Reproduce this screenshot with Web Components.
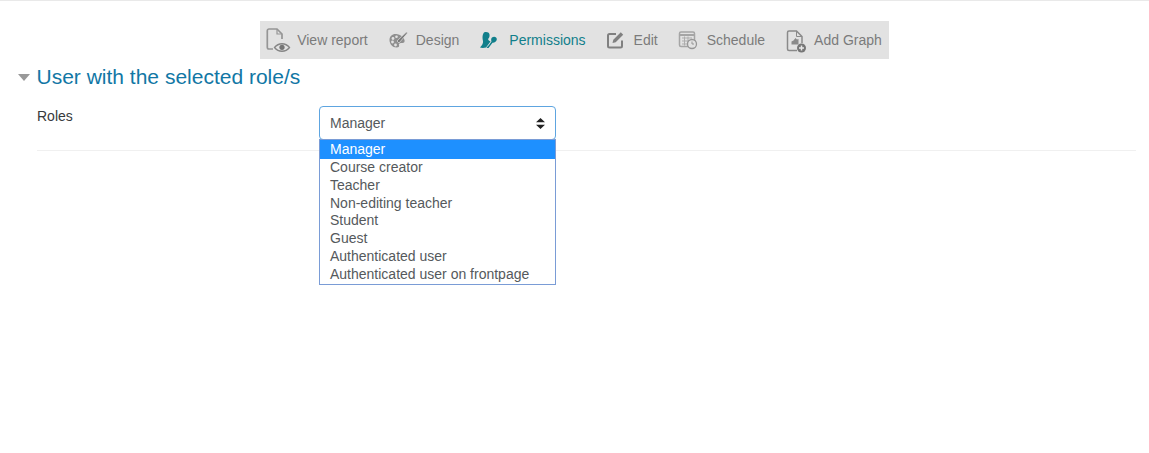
<!DOCTYPE html>
<html>
<head>
<meta charset="utf-8">
<style>
    html, body { margin: 0; padding: 0; background: #fff; min-height: 453px; }
    body { font-family: "Liberation Sans", Arial, sans-serif; font-size: 14px; color: #373a3c; }
</style>
</head>
<body>
<report-page>
    <report-toolbar>
        <tool-item label="View report" gap="6" icon="view"></tool-item>
        <tool-item label="Design" gap="8" icon="design"></tool-item>
        <tool-item label="Permissions" gap="11" icon="permissions" active></tool-item>
        <tool-item label="Edit" gap="10" icon="edit"></tool-item>
        <tool-item label="Schedule" gap="9" icon="schedule"></tool-item>
        <tool-item label="Add Graph" gap="7" icon="graph"></tool-item>
    </report-toolbar>
    <form-section heading="User with the selected role/s">
        <role-select label="Roles" value="Manager"
            options="Manager|Course creator|Teacher|Non-editing teacher|Student|Guest|Authenticated user|Authenticated user on frontpage"></role-select>
    </form-section>
</report-page>

<script>
const icons = {
    view: `<svg width="25" height="26" viewBox="0 0 25 26" fill="none" stroke="#959595" stroke-width="1.700">
        <path d="M7 22H3a1.700 1.700 0 0 1-1.700-1.700V3.700A1.700 1.700 0 0 1 3 2h8l5 5v5"/><path d="M11 2v5h5" stroke-width="1.200"/>
        <path d="M8.500 20.500c4-5 11-5 15 0c-4 5-11 5-15 0z" stroke-width="1.300" stroke="#858585"/><circle cx="16" cy="20.300" r="2.600" fill="#757575" stroke="none"/></svg>`,
    design: `<svg width="20" height="20" viewBox="0 0 20 20"><path d="M8.500 4C4.500 3.500 1.500 6 1.500 10s3 7.500 7 7.500c2.500 0 3-1.500 2.500-2.500s.5-2 2-2h1.500c1.500 0 2.500-1 2-3C15.500 6.500 12.500 4.500 8.500 4z" fill="#8f8f8f"/>
        <circle cx="5" cy="8.500" r="1.400" fill="#e2e2e2"/><circle cx="4.500" cy="12" r="1.400" fill="#e2e2e2"/><circle cx="7.500" cy="15" r="1.400" fill="#e2e2e2"/><circle cx="8.500" cy="6.800" r="1.300" fill="#e2e2e2"/>
        <path d="M18.500 2L9 11l2 2L19.500 3z" fill="#777" stroke="#e2e2e2" stroke-width=".7"/></svg>`,
    permissions: `<svg width="19" height="18" viewBox="0 0 19 18" fill="#117f8b">
        <path d="M5 1.500C7 .5 10 1 10.500 3.500c.3 2-.5 3.500-1.500 4.500c.5 1.500 1.500 2 2.500 2.500L7 16.500c-2 .5-4.500.5-6 0c1-1.500 2.500-2.500 3-5c.3-1.500-.5-3-.5-5C3.500 4.500 4 2.500 5 1.500z"/>
        <path d="M13 6.500c2-1.500 5-.500 4.800 2c-.2 2-2.300 3.500-4.300 3.300L9.500 17H7.500c.5-1 1.500-2 2.500-3l2.500-3.500c-.5-1.500-.5-3 .5-4z"/></svg>`,
    edit: `<svg width="18" height="18" viewBox="0 0 18 18" fill="none"><path d="M16 9.500V15a1.500 1.500 0 0 1-1.500 1.500H3.500A1.500 1.500 0 0 1 2 15V4.500A1.500 1.500 0 0 1 3.500 3H10" stroke="#808080" stroke-width="2"/>
        <path d="M6.500 12l.8-3.200L14.800 1.300l2.400 2.400-7.500 7.500z" fill="#808080"/></svg>`,
    schedule: `<svg width="20" height="20" viewBox="0 0 20 20" fill="none"><rect x="1.500" y="2" width="15" height="14.500" rx="1.500" stroke="#a5a5a5" stroke-width="1.500"/>
        <path d="M1.500 5h15" stroke="#a5a5a5" stroke-width="2"/><path d="M4 8h10M4 11h10M4 14h6M6.500 6.500v9M10 6.500v9" stroke="#adadad"/>
        <circle cx="14" cy="14" r="4.500" fill="#e2e2e2" stroke="#969696" stroke-width="1.300"/><path d="M14 11.500V14h2" stroke="#969696"/></svg>`,
    graph: `<svg width="22" height="25" viewBox="0 0 22 25" fill="none"><path d="M12 22.500H4a1.500 1.500 0 0 1-1.500-1.500V4.500A1.500 1.500 0 0 1 4 3h7.500L17 8.500V15" stroke="#8a8a8a" stroke-width="1.500"/><path d="M11.500 3v5.500H17" stroke="#8a8a8a"/>
        <path d="M6.500 16.500V13.500l2-1 2-2.500 1.500 1.500 1.500-.5v5.500z" fill="#8a8a8a"/><circle cx="16.500" cy="20" r="4.500" fill="#767676"/><path d="M14 20h5M16.500 17.500v5" stroke="#e8e8e8" stroke-width="1.500"/></svg>`
};

class ReportPage extends HTMLElement {
    constructor(){
        super();
        this.attachShadow({mode: 'open'});
        this.shadowRoot.innerHTML = `
        <style>
            :host { display: block; min-height: 432px; border-top: 1px solid #e9e9e9; padding: 20px 13px 0 18px; }
        </style>
        <slot></slot>`;
    }
}

class ReportToolbar extends HTMLElement {
    constructor(){
        super();
        this.attachShadow({mode: 'open'});
        this.shadowRoot.innerHTML = `
        <style>
            :host { display: flex; justify-content: center; margin-right: 5px; }
            .bar { display: flex; align-items: center; height: 38px; background: #e2e2e2; padding: 0 7px 0 6px; gap: 20px; }
        </style>
        <div class="bar"><slot></slot></div>`;
    }
}

class ToolItem extends HTMLElement {
    constructor(){
        super();
        this.attachShadow({mode: 'open'});
    }
    connectedCallback(){
        this.shadowRoot.innerHTML = `
        <style>
            :host { display: flex; align-items: center; color: #7b7b7b; font-size: 14px; white-space: nowrap; }
            :host([active]) { color: #117f8b; }
            svg { display: block; }
            span { margin-left: ${this.getAttribute('gap')}px; }
        </style>
        ${icons[this.getAttribute('icon')]}<span>${this.getAttribute('label')}</span>`;
    }
}

class FormSection extends HTMLElement {
    constructor(){
        super();
        this.attachShadow({mode: 'open'});
    }
    connectedCallback(){
        this.shadowRoot.innerHTML = `
        <style>
            :host { display: block; margin-top: 6px; }
            .head { display: flex; align-items: center; height: 24px; color: #1177a5; font-size: 21px; }
            .caret { width: 0; height: 0; border: 6.500px solid transparent; border-top: 7px solid #999; border-bottom: 0; margin-right: 6.500px; }
            .body { padding-left: 19px; margin-top: 17px; }
        </style>
        <div class="head"><i class="caret"></i><span>${this.getAttribute('heading')}</span></div>
        <div class="body"><slot></slot></div>`;
    }
}

class RoleSelect extends HTMLElement {
    constructor(){
        super();
        this.attachShadow({mode: 'open'});
    }
    connectedCallback(){
        let value = this.getAttribute('value');
        let rows = this.getAttribute('options').split('|').map((name) => {
            let cls = name == value ? ' class="on"' : '';
            return `<li${cls}>${name}</li>`;
        }).join('');
        this.shadowRoot.innerHTML = `
        <style>
            :host { display: grid; grid-template-columns: 282px 237px; height: 44px; border-bottom: 1px solid #f0f0f0; }
            .label { padding-top: 2px; font-size: 14px; line-height: 17px; color: #373a3c; }
            .wrap { position: relative; }
            .box { box-sizing: border-box; height: 34px; border: 1px solid #5ea5e0; border-radius: 4px; display: flex; align-items: center; justify-content: space-between; padding: 0 10px; color: #55595c; font-size: 14px; }
            .box svg { display: block; }
            ul { position: absolute; left: 0; right: 0; top: 33px; z-index: 2; box-sizing: border-box; list-style: none; margin: 0; padding: 0; background: #fff; border: 1px solid #7a9cd6; color: #55595c; }
            li { height: 17.800px; line-height: 16px; padding-left: 10px; white-space: nowrap; font-size: 14px; }
            li.on { height: 19px; line-height: 18px; background: #1e90ff; color: #fff; }
        </style>
        <div class="label">${this.getAttribute('label')}</div>
        <div class="wrap">
            <div class="box"><span>${value}</span>
                <svg width="9" height="11" viewBox="0 0 9 11" fill="#222"><path d="M4.500 0L9 4.300H0zM4.500 11L0 6.700h9z"/></svg>
            </div>
            <ul>${rows}</ul>
        </div>`;
    }
}

window.customElements.define('report-page', ReportPage);
window.customElements.define('report-toolbar', ReportToolbar);
window.customElements.define('tool-item', ToolItem);
window.customElements.define('form-section', FormSection);
window.customElements.define('role-select', RoleSelect);
</script>
</body>
</html>
